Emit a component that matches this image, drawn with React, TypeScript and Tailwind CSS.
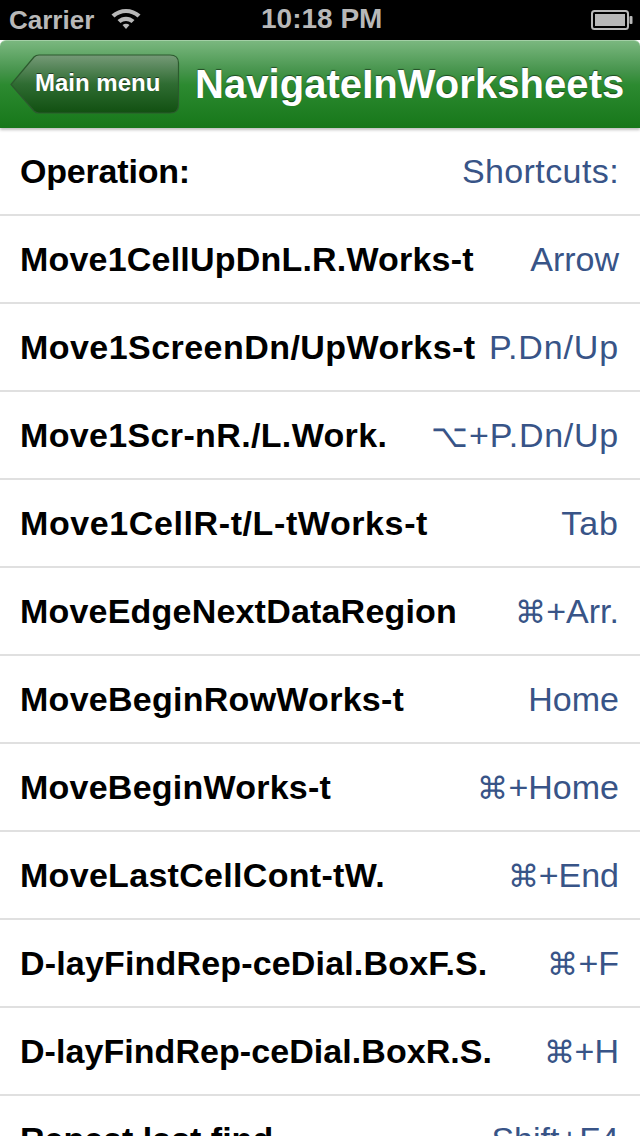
const rows: { op: string; opClass: string; sym?: string; symClass?: string; key: string; keyClass: string }[] = [
  { op: "Operation:", opClass: "tracking-[-0.2px]", key: "Shortcuts:", keyClass: "tracking-[0.4px]" },
  { op: "Move1CellUpDnL.R.Works-t", opClass: "tracking-[0.2px]", key: "Arrow", keyClass: "" },
  { op: "Move1ScreenDn/UpWorks-t", opClass: "tracking-[0.45px]", key: "P.Dn/Up", keyClass: "tracking-[0.85px]" },
  { op: "Move1Scr-nR./L.Work.", opClass: "tracking-[0.35px]", sym: "⌥", symClass: "text-[32px]", key: "+P.Dn/Up", keyClass: "tracking-[0.75px]" },
  { op: "Move1CellR-t/L-tWorks-t", opClass: "tracking-[0.6px]", key: "Tab", keyClass: "tracking-[1px]" },
  { op: "MoveEdgeNextDataRegion", opClass: "tracking-[0.2px]", sym: "⌘", symClass: "text-[31px]", key: "+Arr.", keyClass: "" },
  { op: "MoveBeginRowWorks-t", opClass: "tracking-[0.27px]", key: "Home", keyClass: "" },
  { op: "MoveBeginWorks-t", opClass: "tracking-[0.24px]", sym: "⌘", symClass: "text-[31px]", key: "+Home", keyClass: "" },
  { op: "MoveLastCellCont-tW.", opClass: "tracking-[0.3px]", sym: "⌘", symClass: "text-[31px]", key: "+End", keyClass: "" },
  { op: "D-layFindRep-ceDial.BoxF.S.", opClass: "tracking-[0.17px]", sym: "⌘", symClass: "text-[31px]", key: "+F", keyClass: "" },
  { op: "D-layFindRep-ceDial.BoxR.S.", opClass: "tracking-[0.06px]", sym: "⌘", symClass: "text-[31px]", key: "+H", keyClass: "" },
  { op: "Repeat last find", opClass: "", key: "Shift+F4", keyClass: "" },
];

function Wifi() {
  return (
    <svg width="32" height="24" viewBox="0 0 32 24" className="ml-[16px] mt-[-4px]">
      <path d="M1.500 8.500C9.500 1 22.500 1 30.500 8.500L27.500 11.500C21 5.500 11 5.500 4.500 11.500Z" fill="#b8b8b8" />
      <path d="M7.500 14C12.500 9.500 19.500 9.500 24.500 14L21.500 17C18.500 14.300 13.500 14.300 10.500 17Z" fill="#b8b8b8" />
      <path d="M12.500 19C14.500 17.300 17.500 17.300 19.500 19L16 23Z" fill="#b8b8b8" />
    </svg>
  );
}

function Battery() {
  return (
    <svg width="42" height="20" viewBox="0 0 42 20">
      <rect x="1" y="1" width="36" height="18" rx="2.500" fill="none" stroke="#b8b8b8" strokeWidth="2" />
      <rect x="4" y="4" width="30" height="12" fill="#b8b8b8" />
      <rect x="38.500" y="6" width="3" height="8" rx="1" fill="#b8b8b8" />
    </svg>
  );
}

function BackShape() {
  return (
    <svg width="170" height="60" viewBox="0 0 170 60" className="absolute left-0 top-0">
      <defs>
        <linearGradient id="backFill" x1="0" y1="0" x2="0" y2="1">
          <stop offset="0" stopColor="#769a78" />
          <stop offset="0.5" stopColor="#2f6c32" />
          <stop offset="1" stopColor="#115011" />
        </linearGradient>
      </defs>
      <path
        d="M1 30.500L24 3Q26 1 29 1H160Q168.500 1 168.500 9V51Q168.500 59 160 59H29Q26 59 24 57Z"
        fill="url(#backFill)"
        stroke="#2c5a2e"
        strokeWidth="1.200"
      />
    </svg>
  );
}

export default function App() {
  return (
    <div className="w-[640px] h-[1136px] overflow-hidden bg-white font-['Liberation_Sans',Arial,sans-serif]">
      <div className="h-10 bg-black flex items-center justify-between pl-[9px] pr-[7px] relative text-[#b8b8b8] text-[26px] leading-none">
        <div className="flex items-center">
          <span className="font-bold">Carrier</span>
          <Wifi />
        </div>
        <span className="font-bold absolute left-[261px] top-[5px] text-[28px] text-[#b8b8b8]">10:18 PM</span>
        <Battery />
      </div>
      <div className="h-[88px] rounded-t-[6px] bg-[linear-gradient(#7ab77f_0px,#46944c_30px,#2c8a30_44px,#17771a_87px)] border-t border-[#a3cfa6] flex items-center pl-[10px] shadow-[0_2px_3px_rgba(0,0,0,0.25)] relative z-10">
        <div className="relative w-[170px] h-[60px] shrink-0 mt-[-1px]">
          <BackShape />
          <span className="absolute left-[25px] top-[14px] text-[24px] leading-[30px] font-bold text-white [text-shadow:0_-1px_0_rgba(0,0,0,0.5)] whitespace-nowrap">Main menu</span>
        </div>
        <span className="ml-[15px] text-[40px] leading-none font-bold text-white whitespace-nowrap tracking-[0.05px] [text-shadow:0_-1px_1px_rgba(0,0,0,0.5)] mt-[-2px]">NavigateInWorksheets</span>
      </div>
      <div>
        {rows.map((r) => (
          <div key={r.op} className="h-[88px] flex items-center justify-between pl-5 pr-[21px] border-b-2 border-[#e0e0e0] whitespace-nowrap">
            <span className={`text-[34px] font-bold text-black ${r.opClass}`}>{r.op}</span>
            <span className={`text-[34px] text-[#385487] ${r.keyClass}`}>
              {r.sym && <span className={r.symClass}>{r.sym}</span>}
              {r.key}
            </span>
          </div>
        ))}
      </div>
    </div>
  );
}
